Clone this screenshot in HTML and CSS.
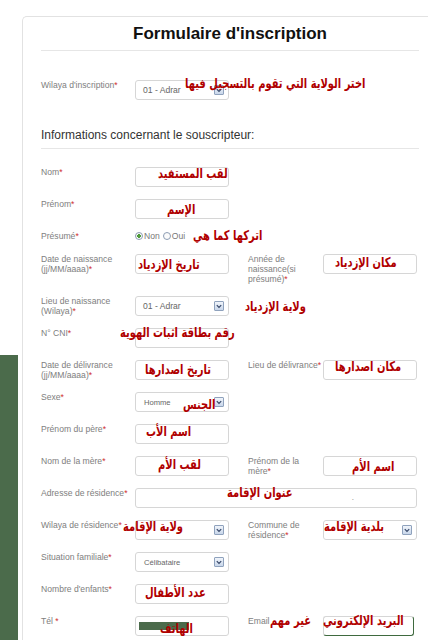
FILE: index.html
```html
<!DOCTYPE html>
<html lang="fr">
<head>
<meta charset="utf-8">
<title>Formulaire d'inscription</title>
<link rel="stylesheet" href="styles.css">
</head>
<body>
<div class="page">
  <div class="side"></div>
  <div class="card">
    <h1 class="title">Formulaire d'inscription</h1>
    <hr class="rule">

    <div class="row row-first">
      <label class="lbl">Wilaya d'inscription<span class="req">*</span></label>
      <div class="field select"><span class="opt">01 - Adrar</span><span class="arrow"><svg viewBox="0 0 9 9" width="9" height="9"><polyline points="2,3 4.5,5.5 7,3" fill="none" stroke="#334466" stroke-width="1.3"/></svg></span></div>
      <span class="ann a-wilaya" dir="rtl">اختر الولاية التي تقوم بالتسجيل فيها</span>
    </div>

    <h2 class="section">Informations concernant le souscripteur:</h2>
    <hr class="rule rule-section">

    <div class="row row-top">
      <label class="lbl">Nom<span class="req">*</span></label>
      <div class="field"></div>
      <span class="ann a-nom" dir="rtl">لقب المستفيد</span>
    </div>

    <div class="row">
      <label class="lbl">Prénom<span class="req">*</span></label>
      <div class="field"></div>
      <span class="ann a-prenom" dir="rtl">الإسم</span>
    </div>

    <div class="row row-radio">
      <label class="lbl">Présumé<span class="req">*</span></label>
      <div class="radios">
        <span class="radio checked"></span><span class="rtxt">Non</span>
        <span class="radio"></span><span class="rtxt">Oui</span>
      </div>
      <span class="ann a-presume" dir="rtl">اتركها كما هي</span>
    </div>

    <div class="row">
      <label class="lbl">Date de naissance<br>(jj/MM/aaaa)<span class="req">*</span></label>
      <div class="field"></div>
      <label class="lbl lbl-right">Année de<br>naissance(si<br>présumé)<span class="req">*</span></label>
      <div class="field"></div>
      <span class="ann a-datenais" dir="rtl">تاريخ الإزدياد</span>
      <span class="ann a-lieunais" dir="rtl">مكان الإزدياد</span>
    </div>

    <div class="row">
      <label class="lbl">Lieu de naissance<br>(Wilaya)<span class="req">*</span></label>
      <div class="field select"><span class="opt">01 - Adrar</span><span class="arrow"><svg viewBox="0 0 9 9" width="9" height="9"><polyline points="2,3 4.5,5.5 7,3" fill="none" stroke="#334466" stroke-width="1.3"/></svg></span></div>
      <span class="ann a-wilayanais" dir="rtl">ولاية الإزدياد</span>
    </div>

    <div class="row">
      <label class="lbl">N° CNI<span class="req">*</span></label>
      <div class="field"></div>
      <span class="ann a-cni" dir="rtl">رقم بطاقة اثبات الهوية</span>
    </div>

    <div class="row">
      <label class="lbl">Date de délivrance<br>(jj/MM/aaaa)<span class="req">*</span></label>
      <div class="field"></div>
      <label class="lbl lbl-right nowrap">Lieu de délivrance<span class="req">*</span></label>
      <div class="field"></div>
      <span class="ann a-datedel" dir="rtl">تاريخ اصدارها</span>
      <span class="ann a-lieudel" dir="rtl">مكان اصدارها</span>
    </div>

    <div class="row">
      <label class="lbl">Sexe<span class="req">*</span></label>
      <div class="field select"><span class="opt opt-small">Homme</span><span class="arrow"><svg viewBox="0 0 9 9" width="9" height="9"><polyline points="2,3 4.5,5.5 7,3" fill="none" stroke="#334466" stroke-width="1.3"/></svg></span></div>
      <span class="ann a-sexe" dir="rtl">الجنس</span>
    </div>

    <div class="row">
      <label class="lbl">Prénom du père<span class="req">*</span></label>
      <div class="field"></div>
      <span class="ann a-pere" dir="rtl">اسم الأب</span>
    </div>

    <div class="row">
      <label class="lbl">Nom de la mère<span class="req">*</span></label>
      <div class="field"></div>
      <label class="lbl lbl-right">Prénom de la<br>mère<span class="req">*</span></label>
      <div class="field"></div>
      <span class="ann a-nommere" dir="rtl">لقب الأم</span>
      <span class="ann a-prenommere" dir="rtl">اسم الأم</span>
    </div>

    <div class="row">
      <label class="lbl">Adresse de résidence<span class="req">*</span></label>
      <div class="field field-wide"><span class="dot">.</span></div>
      <span class="ann a-adresse" dir="rtl">عنوان الإقامة</span>
    </div>

    <div class="row">
      <label class="lbl nowrap">Wilaya de résidence<span class="req">*</span></label>
      <div class="field select"><span class="opt"></span><span class="arrow"><svg viewBox="0 0 9 9" width="9" height="9"><polyline points="2,3 4.5,5.5 7,3" fill="none" stroke="#334466" stroke-width="1.3"/></svg></span></div>
      <label class="lbl lbl-right">Commune de<br>résidence<span class="req">*</span></label>
      <div class="field select"><span class="opt"></span><span class="arrow"><svg viewBox="0 0 9 9" width="9" height="9"><polyline points="2,3 4.5,5.5 7,3" fill="none" stroke="#334466" stroke-width="1.3"/></svg></span></div>
      <span class="ann a-wilayares" dir="rtl">ولاية الإقامة</span>
      <span class="ann a-commune" dir="rtl">بلدية الإقامة</span>
    </div>

    <div class="row">
      <label class="lbl">Situation familiale<span class="req">*</span></label>
      <div class="field select"><span class="opt opt-small">Célibataire</span><span class="arrow"><svg viewBox="0 0 9 9" width="9" height="9"><polyline points="2,3 4.5,5.5 7,3" fill="none" stroke="#334466" stroke-width="1.3"/></svg></span></div>
    </div>

    <div class="row">
      <label class="lbl">Nombre d'enfants<span class="req">*</span></label>
      <div class="field"></div>
      <span class="ann a-enfants" dir="rtl">عدد الأطفال</span>
    </div>

    <div class="row">
      <label class="lbl">Tél <span class="req">*</span></label>
      <div class="field field-tel"><span class="mark"></span></div>
      <label class="lbl lbl-right">Email</label>
      <div class="field field-email"></div>
      <span class="ann a-tel" dir="rtl">الهاتف</span>
      <span class="ann a-optional" dir="rtl">غير مهم</span>
      <span class="ann a-email" dir="rtl">البريد الإلكتروني</span>
    </div>
  </div>
</div>
</body>
</html>
```

FILE: styles.css
```css
html, body {
  margin: 0;
  padding: 0;
  width: 428px;
  height: 640px;
  overflow: hidden;
  background: #ffffff;
  font-family: "Liberation Sans", Arial, sans-serif;
}

.page {
  display: flex;
  align-items: flex-start;
  width: 428px;
  height: 640px;
  overflow: hidden;
}

.side {
  flex: none;
  width: 18px;
  height: 285px;
  margin-top: 355px;
  background: #4b6b4b;
}

.card {
  flex: none;
  box-sizing: border-box;
  width: 415px;
  height: 640px;
  margin-left: 4px;
  margin-top: 16px;
  padding: 7px 18px 0 18px;
  border: 1px solid #e2e2e2;
  border-right: none;
  border-bottom: none;
  border-radius: 5px 0 0 0;
  background: #ffffff;
}

.title {
  margin: 0;
  font-size: 17px;
  line-height: 20px;
  font-weight: bold;
  color: #111111;
  text-align: center;
}

.rule {
  margin: 6px 0 0 0;
  border: 0;
  border-top: 1px solid #e6e6e6;
  height: 0;
}

.rule-section {
  margin-top: 5px;
}

.section {
  margin: 28px 0 0 0;
  font-size: 12px;
  line-height: 15px;
  font-weight: normal;
  color: #333333;
}

.row {
  position: relative;
  display: grid;
  grid-template-columns: 94px 113px 75px 94px;
  align-items: start;
  margin-bottom: 12px;
}

.row-first {
  margin-top: 29px;
  margin-bottom: 0;
}

.row-top {
  margin-top: 18px;
}

.row-radio {
  min-height: 11px;
}

.lbl {
  font-size: 8.6px;
  line-height: 10px;
  color: #7e7e7e;
}

.lbl-right {
  grid-column: 3;
}

.nowrap {
  white-space: nowrap;
}

.req {
  color: #d03030;
}

.field {
  position: relative;
  box-sizing: border-box;
  width: 94px;
  height: 20px;
  border: 1px solid #d6d6d6;
  border-radius: 3px;
  background: #ffffff;
}

.field-wide {
  grid-column: 2 / 5;
  width: 282px;
  display: flex;
  justify-content: flex-end;
  align-items: center;
  padding-right: 62px;
}

.dot {
  font-size: 8px;
  line-height: 8px;
  color: #777;
}

.select {
  display: flex;
  align-items: center;
  justify-content: space-between;
  padding: 0 4px 0 7px;
}

.opt {
  font-size: 8.6px;
  color: #666666;
}

.opt-small {
  font-size: 7.6px;
  padding-left: 1px;
}

.arrow {
  box-sizing: border-box;
  width: 10px;
  height: 10px;
  border: 1px solid #8fa2bd;
  border-radius: 1px;
  background: linear-gradient(#f1f5fb, #c8d6ea);
  display: flex;
  align-items: center;
  justify-content: center;
}

.arrow svg {
  display: block;
}

.radios {
  display: flex;
  align-items: center;
  height: 10px;
}

.radio {
  box-sizing: border-box;
  width: 8px;
  height: 8px;
  border: 1px solid #8d9db3;
  border-radius: 50%;
  background: #fbfbfb;
  display: inline-block;
}

.radio.checked {
  background: radial-gradient(circle, #4e9a3a 0 1.6px, #fbfbfb 2px);
}

.rtxt {
  font-size: 8.6px;
  color: #777;
  margin: 0 3px 0 1px;
}

.field-tel {
  padding: 5px 0 0 3px;
}

.mark {
  display: block;
  width: 50px;
  height: 8px;
  background: #4b6b4b;
}

.field-email {
  width: 91px;
  border-bottom: 1px solid #3f6a3f;
  border-right: 1px solid #3f6a3f;
}

/* Arabic hand annotations laid over the form */
.ann {
  position: absolute;
  font-family: "DejaVu Sans Condensed", "DejaVu Sans", sans-serif;
  font-stretch: condensed;
  font-weight: bold;
  font-size: 12px;
  line-height: 16px;
  color: #b00000;
  white-space: nowrap;
  transform-origin: left center;
  transform: scale(0.92, 1.12);
}

.a-wilaya     { left: 144px; top: -4px; }
.a-nom        { left: 117px; top: -1px; }
.a-prenom     { left: 126px; top: 3px; }
.a-presume    { left: 152px; top: -3px; }
.a-datenais   { left: 97px;  top: 3px; }
.a-lieunais   { left: 294px; top: 1px; }
.a-wilayanais { left: 204px; top: 3px; }
.a-cni        { left: 79px;  top: -3px; }
.a-datedel    { left: 104px; top: 2px; }
.a-lieudel    { left: 294px; top: -1px; }
.a-sexe       { left: 142px; top: 5px; }
.a-pere       { left: 105px; top: 0; }
.a-nommere    { left: 117px; top: 1px; }
.a-prenommere { left: 311px; top: 3px; }
.a-adresse    { left: 186px; top: -3px; }
.a-wilayares  { left: 82px;  top: -1px; }
.a-commune    { left: 283px; top: -1px; }
.a-enfants    { left: 104px; top: 1px; }
.a-tel        { left: 119px; top: 5px; }
.a-optional   { left: 229px; top: -3px; }
.a-email      { left: 282px; top: -3px; }
```
